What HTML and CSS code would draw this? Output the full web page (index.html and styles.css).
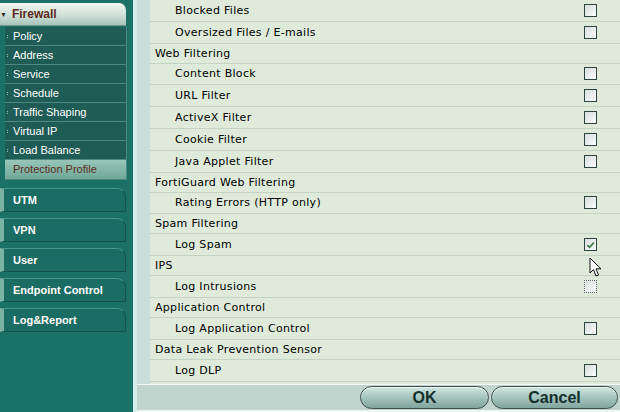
FILE: index.html
```html
<!DOCTYPE html>
<html lang="en">
<head>
  <meta charset="UTF-8" />
  <title>Protection Profile</title>
  <link rel="stylesheet" href="styles.css">
</head>
<body>
  <div class="app">
    <nav class="sidebar">
      <div class="group-head"><span class="caret">&#9660;</span>Firewall</div>
      <ul class="submenu">
        <li>Policy</li>
        <li>Address</li>
        <li>Service</li>
        <li>Schedule</li>
        <li>Traffic Shaping</li>
        <li>Virtual IP</li>
        <li>Load Balance</li>
        <li class="active">Protection Profile</li>
      </ul>
      <div class="tab">UTM</div>
      <div class="tab">VPN</div>
      <div class="tab">User</div>
      <div class="tab">Endpoint Control</div>
      <div class="tab">Log&amp;Report</div>
    </nav>

    <main class="pane">
      <div class="list">
        <div class="rows">
          <div class="row sub"><span>Blocked Files</span><i class="cb"></i></div>
          <div class="row sub"><span>Oversized Files / E-mails</span><i class="cb"></i></div>
          <div class="row head"><span>Web Filtering</span></div>
          <div class="row sub"><span>Content Block</span><i class="cb"></i></div>
          <div class="row sub"><span>URL Filter</span><i class="cb"></i></div>
          <div class="row sub"><span>ActiveX Filter</span><i class="cb"></i></div>
          <div class="row sub"><span>Cookie Filter</span><i class="cb"></i></div>
          <div class="row sub"><span>Java Applet Filter</span><i class="cb"></i></div>
          <div class="row head"><span>FortiGuard Web Filtering</span></div>
          <div class="row sub"><span>Rating Errors (HTTP only)</span><i class="cb"></i></div>
          <div class="row head"><span>Spam Filtering</span></div>
          <div class="row sub"><span>Log Spam</span><i class="cb checked"><svg viewBox="0 0 12 12" width="12" height="12"><path d="M2.5 6.2 L5 8.6 L9.6 3.4" fill="none" stroke="#3f7a4c" stroke-width="1.8"/></svg></i></div>
          <div class="row head"><span>IPS</span></div>
          <div class="row sub"><span>Log Intrusions</span><i class="cb focus"></i></div>
          <div class="row head"><span>Application Control</span></div>
          <div class="row sub"><span>Log Application Control</span><i class="cb"></i></div>
          <div class="row head"><span>Data Leak Prevention Sensor</span></div>
          <div class="row sub"><span>Log DLP</span><i class="cb"></i></div>
        </div>
      </div>
      <div class="footer">
        <button class="pill">OK</button>
        <button class="pill">Cancel</button>
      </div>
      <svg class="cursor" viewBox="0 0 13 21" width="13" height="21">
        <path d="M1 1 L1 16 L4.5 12.5 L7 19 L9.5 18 L7 11.8 L12 11.8 Z" fill="#fff" stroke="#111" stroke-width="1"/>
      </svg>
    </main>
  </div>
</body>
</html>
```

FILE: styles.css
```css
* { box-sizing: border-box; margin: 0; padding: 0; }
html, body { height: 100%; overflow: hidden; }
body {
  background: #1c7166;
  font-family: 'DejaVu Sans', Verdana, sans-serif;
}
.app {
  display: flex;
  height: 412px;
}

/* sidebar */
.sidebar {
  width: 133px;
  flex: none;
  background: #1c7166;
  padding-top: 3px;
  font-family: 'Liberation Sans', Arial, sans-serif;
}
.group-head {
  height: 23px;
  width: 126px;
  display: flex;
  align-items: center;
  padding-left: 3px;
  background: linear-gradient(#f2f6f0, #cfe0d8 55%, #a6c3ba);
  border-radius: 0 7px 0 0;
  border-bottom: 1px solid #6f958d;
  color: #5c2a22;
  font-weight: bold;
  font-size: 12px;
}
.caret {
  font-size: 7px;
  color: #3a2a25;
  margin-right: 5px;
  margin-left: -3px;
}
.submenu {
  list-style: none;
  margin: 1px 0 8px 5px;
  width: 122px;
}
.submenu li {
  height: 19px;
  line-height: 18px;
  padding-left: 8px;
  font-size: 11px;
  color: #fff;
  background: #1e5c55;
  border-bottom: 1px solid #4f8880;
  border-right: 1px solid #4f8880;
  position: relative;
}
.submenu li::before {
  content: '';
  position: absolute;
  left: 2px; top: 8px;
  width: 3px; height: 3px;
  border-left: 1px dotted #8fb8b0;
}
.submenu li.active {
  background: linear-gradient(#98c6b9, #6fa898);
  color: #5a2c25;
  height: 20px;
}
.tab {
  height: 24px;
  width: 126px;
  margin-bottom: 6px;
  display: flex;
  align-items: center;
  padding-left: 9px;
  background: #1b6c62;
  border-top: 1px solid #4a968b;
  border-bottom: 1px solid #145249;
  border-right: 1px solid #145249;
  border-left: 4px solid #7bb3a6;
  border-radius: 0 9px 0 0;
  color: #fff;
  font-weight: bold;
  font-size: 11px;
}

/* content pane */
.pane {
  flex: 1;
  position: relative;
  display: flex;
  flex-direction: column;
  background: #cbdedb;
  border-left: 4px solid #d6eeea;
}
.list {
  height: 384px;
  margin-left: 13px;
  overflow: hidden;
  background: #dfeadb;
}
.row {
  display: flex;
  align-items: center;
  justify-content: space-between;
  padding: 0 23px 0 5px;
  border-bottom: 1px solid #c3d4c5;
  font-size: 11px;
  letter-spacing: 0.3px;
  color: #000;
}
.row.sub { height: 21.8px; padding-left: 25px; }
.row.head { height: 20px; }
.cb {
  width: 13px;
  height: 13px;
  border: 1px solid #2c4442;
  background: linear-gradient(135deg, #d8dedd, #fbfcfc);
  display: flex;
}
.cb.focus { border: 1px dotted #5a6a66; }

.footer {
  flex: 1;
  display: flex;
  justify-content: flex-end;
  align-items: center;
  gap: 2px;
  padding-right: 2px;
  background: #c1d4cd;
  border-top: 1px solid #f2f8f6;
  border-bottom: 2px solid #eef5f3;
}
.pill {
  width: 127px;
  height: 23px;
  border: 1px solid #3e504c;
  border-radius: 12px;
  background: linear-gradient(#d3e6e1, #a9c8c1 45%, #7fa59c);
  box-shadow: inset 0 1px 0 #eef6f4;
  color: #14302c;
  font-family: 'Liberation Sans', Arial, sans-serif;
  font-weight: bold;
  font-size: 16px;
}
.pill:first-child { width: 129px; }
.cursor {
  position: absolute;
  left: 452px;
  top: 257px;
}
```
